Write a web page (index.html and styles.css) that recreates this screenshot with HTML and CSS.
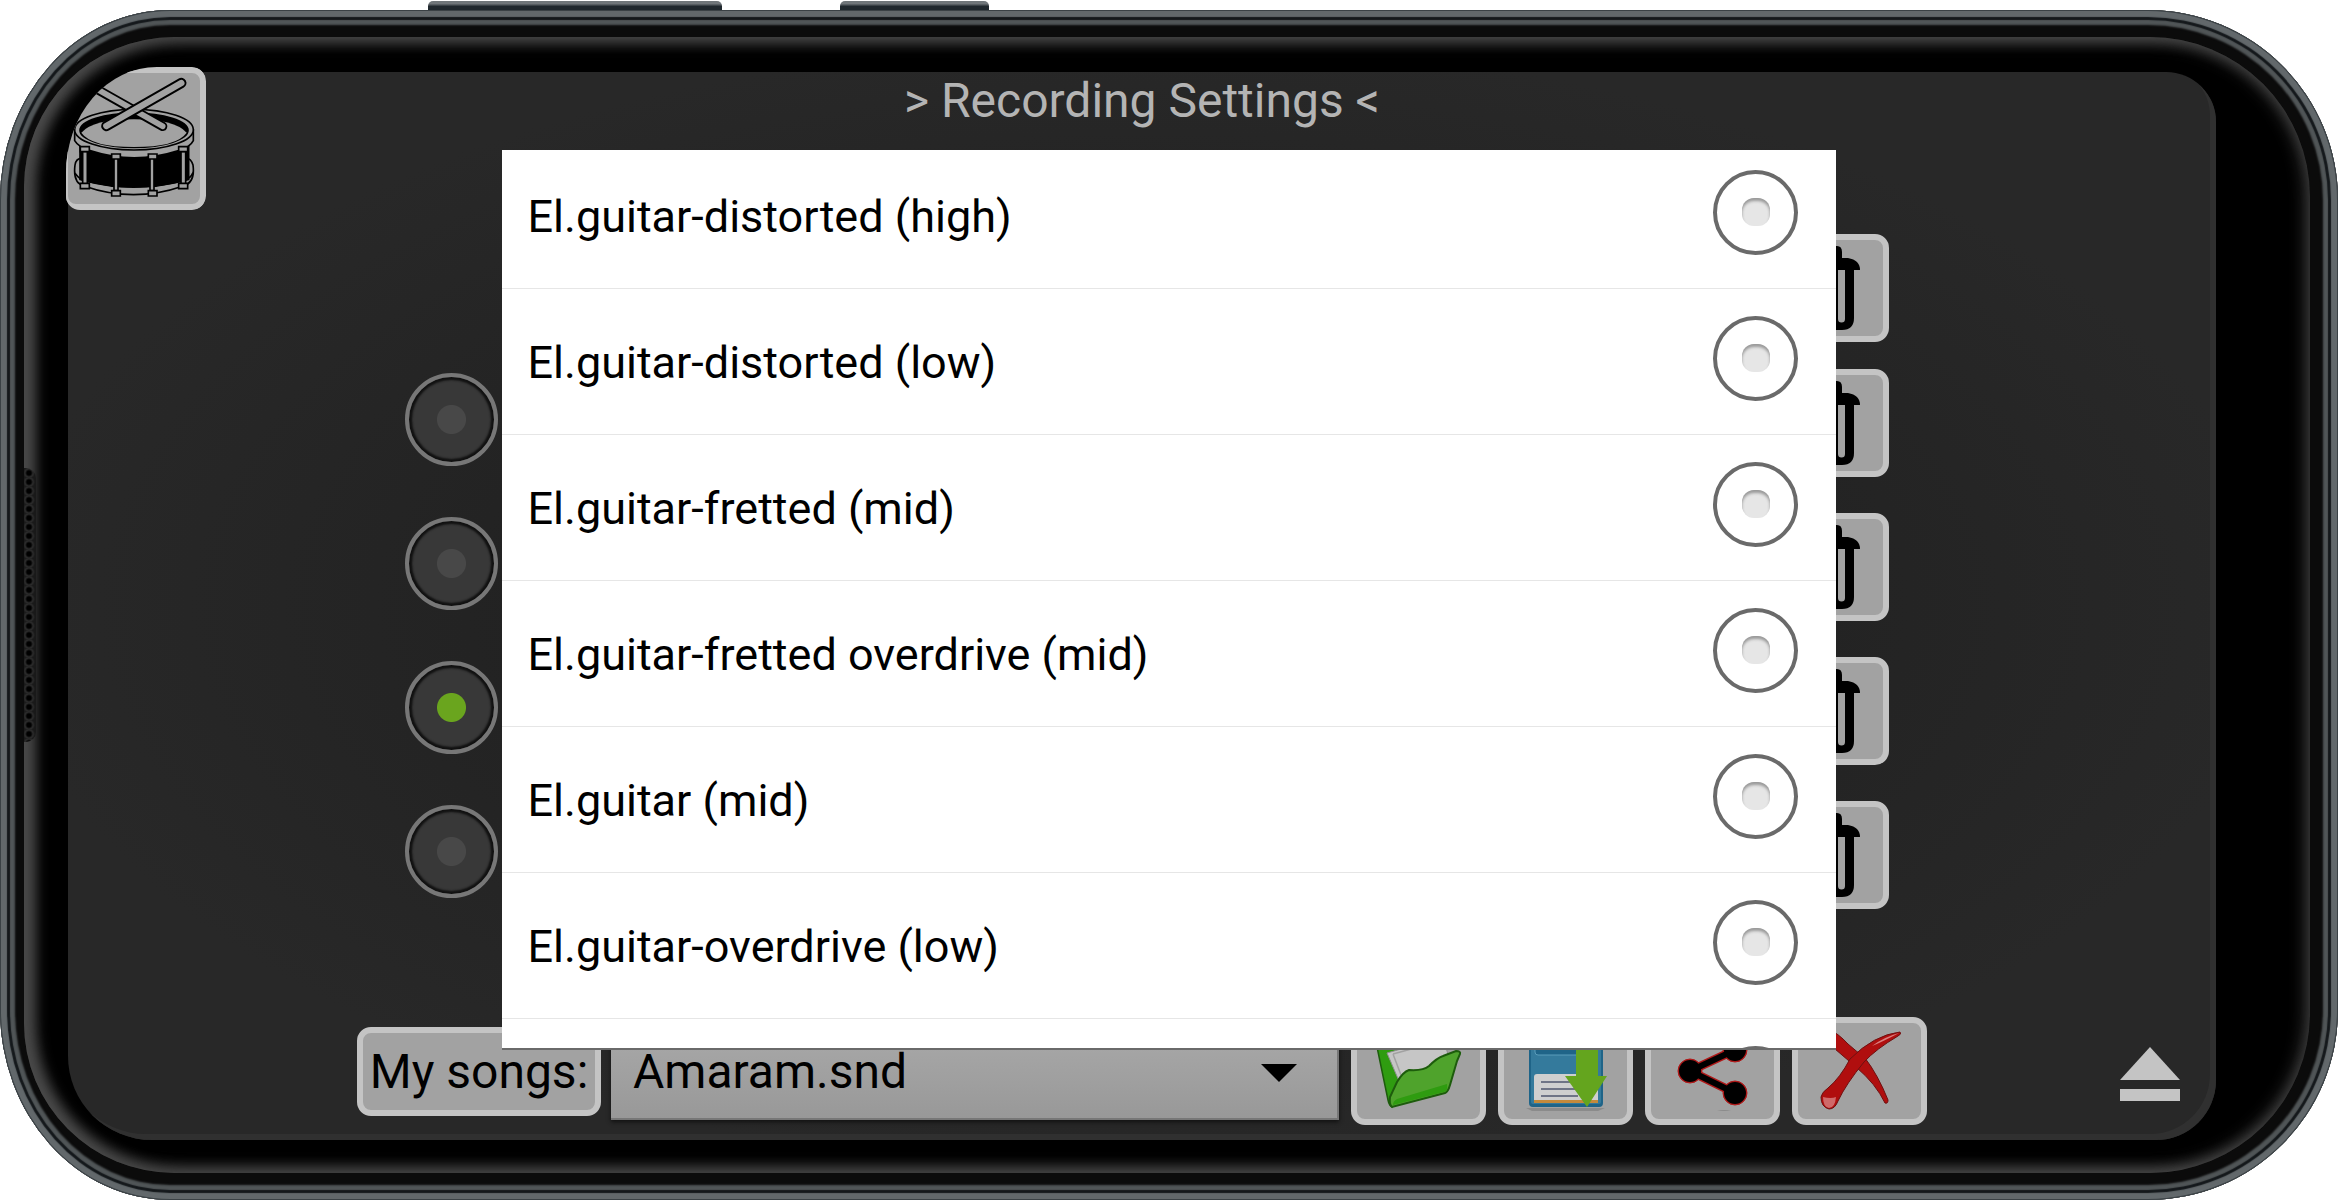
FILE: index.html
```
<!DOCTYPE html>
<html lang="en">
<head>
  <meta charset="UTF-8">
  <meta name="viewport" content="width=device-width, initial-scale=1">
  <title>Recording Settings</title>
  <link rel="stylesheet" href="styles.css">
</head>
<body>
  <div class="side-keys">
    <span class="key key-volume"></span>
    <span class="key key-power"></span>
  </div>

  <div class="phone">
    <div class="bezel">
      <span class="speaker"></span>

      <main class="screen">
        <h1>&gt; Recording Settings &lt;</h1>

        <div class="tracks">
          <div class="track">
            <button class="btn icon-btn" aria-label="Delete track 1"><svg viewBox="0 0 123 96"><use href="#trash"/></svg></button>
          </div>
          <div class="track">
            <input type="radio" class="track-radio" name="track" aria-label="Track 2">
            <button class="btn icon-btn" aria-label="Delete track 2"><svg viewBox="0 0 123 96"><use href="#trash"/></svg></button>
          </div>
          <div class="track">
            <input type="radio" class="track-radio" name="track" aria-label="Track 3">
            <button class="btn icon-btn" aria-label="Delete track 3"><svg viewBox="0 0 123 96"><use href="#trash"/></svg></button>
          </div>
          <div class="track">
            <input type="radio" class="track-radio" name="track" aria-label="Track 4" checked>
            <button class="btn icon-btn" aria-label="Delete track 4"><svg viewBox="0 0 123 96"><use href="#trash"/></svg></button>
          </div>
          <div class="track">
            <input type="radio" class="track-radio" name="track" aria-label="Track 5">
            <button class="btn icon-btn" aria-label="Delete track 5"><svg viewBox="0 0 123 96"><use href="#trash"/></svg></button>
          </div>
        </div>

        <div class="toolbar">
          <div class="songs">
            <button class="btn songs-btn">My songs:</button>
            <div class="song-select">
              <select aria-label="Song">
                <option>Amaram.snd</option>
              </select>
            </div>
            <!-- open -->
            <button class="btn icon-btn" aria-label="Open">
              <svg viewBox="6 6 123 96">
                <path d="M26 30 L34 22 L50 24 L52 50 L41 90 Q38 88 37 83 Z" fill="#2f9c10" stroke="#1d5c0c" stroke-width="1.5"/>
                <path d="M36 36 L92 20 L100 48 L48 64 Z" fill="#c6c6c6" stroke="#8e8e8e"/>
                <path d="M42 37 L86 25 M42 37 L50 58" fill="none" stroke="#a2a2a2" stroke-width="1.5"/>
                <path d="M41 90 Q38 88 39 80 L46 65 Q52 55 58 53 Q72 54 78 49 Q86 41 92 39 L105 34 Q110 34 109 37 L106 44 L99 68 Q97 75 94 76 Z" fill="#4fa32c" stroke="#1d5c0c" stroke-width="2"/>
                <path d="M42 88 Q42 84 46 82 L96 67 Q97 75 93 75 Z" fill="#2f9c10"/>
              </svg>
            </button>
            <!-- save -->
            <button class="btn icon-btn" aria-label="Save">
              <svg viewBox="6 6 123 96">
                <path d="M28 91 H107 L100 94 H34 Z" fill="#8b8b8b"/>
                <rect x="31" y="16" width="74" height="74" rx="4" fill="#1f6488"/>
                <rect x="33" y="18" width="70" height="69" rx="2" fill="#347a9c"/>
                <rect x="37" y="16" width="62" height="22" rx="3" fill="#1f6488" stroke="#5a9cba"/>
                <rect x="36" y="57" width="64" height="29" rx="3" fill="#cfcfcf"/>
                <rect x="36" y="83" width="64" height="3" fill="#c48a3c"/>
                <path d="M43 65 H80 M43 72 H78 M43 79 H80" stroke="#6f7486" stroke-width="2"/>
                <path d="M78 20 H100 V59 H109 L89 90 L67 59 H78 Z" fill="#64a51e"/>
              </svg>
            </button>
            <!-- share -->
            <button class="btn icon-btn" aria-label="Share">
              <svg viewBox="6 6 123 96">
                <g stroke="#b01818" fill="#b01818">
                  <path d="M90 33 L45 54 L90 76" fill="none" stroke-width="9"/>
                  <circle cx="45" cy="54" r="12"/><circle cx="90" cy="33" r="12"/><circle cx="90" cy="76" r="12"/>
                </g>
                <path d="M90 33 L45 54 L90 76" fill="none" stroke="#000" stroke-width="6"/>
                <circle cx="45" cy="54" r="11"/><circle cx="90" cy="33" r="11"/><circle cx="90" cy="76" r="11"/>
                <path d="M72 94 Q79 92 86 94 Z" fill="#8a8a8a"/>
              </svg>
            </button>
            <!-- remove -->
            <button class="btn icon-btn" aria-label="Remove">
              <svg viewBox="6 6 123 96">
                <g fill="#b00e0e" stroke="#6e1010" stroke-width="1">
                  <path d="M36 12 Q46 16 56 27 Q64 34 73 41 Q86 58 96 83 Q96 87 93 86 Q84 67 64 50 Q50 38 36 26 Z"/>
                  <path d="M108 15 Q110 17 106 19 Q84 32 72 45 Q54 67 46 84 Q43 92 37 92 Q29 90 29 80 Q30 75 36 71 Q48 61 58 42 Q82 18 108 15 Z"/>
                </g>
                <path d="M107 16 Q92 20 80 29 Q90 25 107 16 Z" fill="#d98080"/>
                <path d="M31 80 Q39 82 44 80 Q43 91 37 91 Q31 90 31 80 Z" fill="#cf6a6a"/>
              </svg>
            </button>
          </div>

          <button class="eject" aria-label="Eject">
            <svg viewBox="0 0 60 54" fill="#c4c4c4"><path d="M30 0 L60 33 H0 Z"/><path d="M0 42 H60 V54 H0 Z"/></svg>
          </button>
        </div>

        <div class="corner">
          <button class="btn drum-btn" aria-label="Drums">
            <svg viewBox="84 69 396 393" fill="#a2a2a2" stroke="#000" stroke-width="5">
              <!-- bottom hoop -->
              <path d="M105 345 Q98 400 132 408 Q280 460 430 408 Q466 398 459 345 Q452 322 435 325 H125 Q108 325 105 345 Z"/>
              <path d="M105 370 Q120 390 134 392 Q280 432 430 392 Q452 386 459 368" fill="none"/>
              <!-- shell -->
              <path d="M120 290 H446 V388 Q282 432 120 388 Z" fill="#000"/>
              <path d="M130 400 Q280 432 436 400" fill="none" stroke="#a2a2a2" stroke-width="4"/>
              <!-- top hoop -->
              <path d="M104 240 V272 Q116 292 150 302 Q282 345 416 302 Q450 292 460 272 V240 Z"/>
              <ellipse cx="282" cy="239" rx="178" ry="61"/>
              <ellipse cx="282" cy="241" rx="162" ry="51" fill="#000"/>
              <path d="M124 248 Q160 208 282 208 Q404 208 440 248 Q410 291 282 291 Q154 291 124 248 Z" stroke="none"/>
              <!-- lugs -->
              <g>
                <path d="M128 304 h14 v98 h-14 Z M222 324 h12 v98 h-12 Z M330 324 h12 v98 h-12 Z M423 304 h14 v98 h-14 Z"/>
                <path d="M121 290 h27 v15 h-27 Z M215 312 h26 v15 h-26 Z M325 312 h26 v15 h-26 Z M416 290 h27 v15 h-27 Z"/>
                <path d="M121 400 h27 v16 h-27 Z M215 422 h26 v16 h-26 Z M325 422 h26 v16 h-26 Z M416 400 h27 v16 h-27 Z"/>
              </g>
              <!-- sticks -->
              <g fill="none" stroke-linecap="round">
                <path d="M140 100 L368 229" stroke-width="28"/>
                <path d="M140 100 L368 229" stroke-width="17" stroke="#a2a2a2"/>
                <path d="M199 228 L424 99" stroke-width="31"/>
                <path d="M199 228 L424 99" stroke-width="19" stroke="#a2a2a2"/>
              </g>
            </svg>
          </button>
        </div>
      </main>
    </div>

    <div class="overlay">
      <div class="dialog" role="dialog" aria-label="Instrument">
        <ul class="sounds">
          <li><label><span>El.guitar-distorted (high)</span><input type="radio" name="sound"></label></li>
          <li><label><span>El.guitar-distorted (low)</span><input type="radio" name="sound"></label></li>
          <li><label><span>El.guitar-fretted (mid)</span><input type="radio" name="sound"></label></li>
          <li><label><span>El.guitar-fretted overdrive (mid)</span><input type="radio" name="sound"></label></li>
          <li><label><span>El.guitar (mid)</span><input type="radio" name="sound"></label></li>
          <li><label><span>El.guitar-overdrive (low)</span><input type="radio" name="sound"></label></li>
          <li><label><span></span><input type="radio" name="sound" aria-label="Next sound"></label></li>
        </ul>
      </div>
    </div>
  </div>

  <svg width="0" height="0" class="sprite">
    <symbol id="trash" viewBox="6 6 123 96">
      <path d="M46 32 V18 Q46 12 52 12 H83 Q88 12 88 18 V24 H94 Q106 26 106 36 H100 V84 Q100 96 88 96 H47 Q35 96 35 84 V36 H28 Q28 26 40 24 H46 Z"/>
      <path d="M54 20 H80 V24 H54 Z" fill="#a2a2a2"/>
      <path d="M44 36 h7 v49 a3 3 0 0 1 -7 0 Z M64 36 h7 v49 a3 3 0 0 1 -7 0 Z M84 36 h7 v49 a3 3 0 0 1 -7 0 Z" fill="#a2a2a2"/>
    </symbol>
  </svg>
</body>
</html>
```
FILE: styles.css
```
* { box-sizing: border-box; }
body {
  margin: 0;
  min-height: 100vh;
  display: flex;
  flex-direction: column;
  background: #fff;
  font-family: Roboto, "Liberation Sans", sans-serif;
  font-size: 48px;
}
button, select { font: inherit; color: #000; }
svg { display: block; }
.sprite { position: absolute; }

/* phone body */
.side-keys { display: flex; gap: 118px; height: 10px; padding: 1px 0 0 428px; }
.key { background: linear-gradient(#70767a 30%, #20282e 60%); border-radius: 5px 5px 0 0; }
.key-volume { width: 294px; }
.key-power { width: 149px; }
.phone {
  position: relative;
  flex: 1;
  display: flex;
  padding: 27px 28px 27px 24px;
  border-radius: 170px 190px 190px 170px / 190px;
  background: #0b0b0b;
  box-shadow:
    inset 0 0 0 1px #3a4145,
    inset 0 0 1px 7px #62686b,
    inset 0 0 1px 10px #14181b,
    inset 0 0 2px 15px #505557;
}
.bezel {
  position: relative;
  flex: 1;
  display: flex;
  padding: 35px 94px 33px 44px;
  border-radius: 150px 160px 160px 150px;
  background: #000;
  box-shadow:
    inset 8px 0 14px 3px #4a4a4a,
    inset 0 0 16px 5px #363636;
}
.speaker {
  position: absolute;
  left: 0;
  top: 50%;
  width: 12px;
  height: 274px;
  transform: translateY(-50%);
  border-radius: 0 10px 10px 0;
  background: radial-gradient(circle at 5px 5px, #000 2px, #2c2c2c 4px, #191919 6px);
  background-size: 12px 9px;
}

/* app screen */
.screen {
  position: relative;
  flex: 1;
  display: flex;
  flex-direction: column;
  border-radius: 90px 50px 60px 84px;
  background: radial-gradient(ellipse, #1f1f1f 20%, #282828 75%);
  box-shadow: inset -6px -6px 0 #303030;
}
h1 {
  margin: 0;
  font-size: 48px;
  font-weight: 400;
  line-height: 58px;
  text-align: center;
  color: #b4b4b4;
}
.btn {
  flex: none;
  padding: 0;
  border: 6px solid #c4c4c4;
  border-radius: 14px;
  background: #a2a2a2;
}
.icon-btn { width: 135px; height: 108px; }
.tracks {
  flex: 1;
  display: flex;
  flex-direction: column;
  gap: 36px;
  padding: 104px 327px 0 337px;
}
.track { display: flex; justify-content: space-between; align-items: flex-start; }
.track:first-child { justify-content: flex-end; margin-bottom: -9px; }
.track-radio {
  appearance: none;
  width: 93px;
  height: 93px;
  margin: 4px 0 0;
  border: 4px solid #777;
  border-radius: 50%;
  background: radial-gradient(circle, #484848 14px, #383838 15px);
  box-shadow: inset 0 0 2px 3px #111;
}
.track-radio:checked { background: radial-gradient(circle, #6aa51e 14px, #383838 15px); }

.toolbar {
  display: grid;
  grid-template-columns: 1fr auto 1fr;
  padding-bottom: 15px;
}
.songs {
  grid-column: 2;
  display: flex;
  align-items: center;
  gap: 12px;
}
.songs-btn { width: 244px; height: 89px; margin-right: -2px; }
.song-select { position: relative; width: 728px; }
.song-select::after {
  content: "";
  position: absolute;
  right: 42px;
  top: 42px;
  border: solid transparent;
  border-width: 18px 18px 0;
  border-top-color: #000;
}
.song-select select {
  appearance: none;
  display: block;
  width: 100%;
  height: 98px;
  padding: 0 22px;
  border: 0;
  border-radius: 0;
  background: linear-gradient(#aaa, #989898);
  box-shadow: inset -2px -2px 0 #777, 0 2px 4px #111;
}
.eject {
  grid-column: 3;
  justify-self: end;
  align-self: end;
  width: 60px;
  margin: 0 36px 24px 0;
  padding: 0;
  border: 0;
  background: none;
}
/* the drum button runs over the rounded corner and is cut by it */
.corner {
  position: absolute;
  left: -2px;
  top: -5px;
  display: flex;
  overflow: hidden;
  border-radius: 91px 14px 14px 14px / 106px 14px 14px 14px;
}
.drum-btn { width: 144px; height: 143px; margin-left: -4px; }

/* instrument list */
.overlay {
  position: absolute;
  inset: 0;
  display: flex;
  justify-content: center;
  align-items: flex-start;
  padding-top: 140px;
}
.dialog {
  width: 57.1%;
  height: calc(100vh - 302px);
  overflow: hidden;
  background: #fff;
  box-shadow: 0 2px 0 #6a6a6a;
}
.sounds {
  margin: -7px 0 0;
  padding: 0;
  list-style: none;
  font-size: 45px;
}
.sounds li { height: 146px; border-bottom: 1px solid #e6e6e6; }
.sounds label {
  display: flex;
  justify-content: space-between;
  align-items: flex-start;
  padding: 27px 38px 0 26px;
  line-height: 94px;
}
.sounds input {
  appearance: none;
  width: 85px;
  height: 85px;
  margin: 0;
  border: 4px solid #6a6a6a;
  border-radius: 50%;
}
.sounds input::before {
  content: "";
  display: block;
  width: 28px;
  height: 28px;
  margin: 24px auto 0;
  border-radius: 12px;
  background: #e6e6e6;
  box-shadow: inset 0 3px 3px #999;
}
.sounds input:checked::before { background: #6aa51e; }
```
